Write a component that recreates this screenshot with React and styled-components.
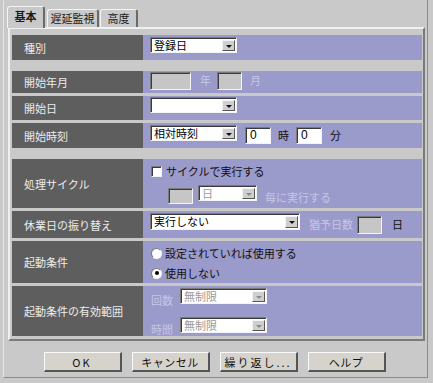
import styled, { createGlobalStyle } from "styled-components";

const GlobalStyle = createGlobalStyle`
    html, body {
        margin: 0;
        padding: 0;
        background: #c9c9c9;
    }
    body {
        font-family: "Noto Sans CJK JP", "Liberation Sans", sans-serif;
        font-size: 11px;
        color: #000;
    }
`;

export default function App() {
    return (
        <Frame>
            <GlobalStyle />
            <TabStrip>
                <Tab $active $w={38}>基本</Tab>
                <Tab $w={52}>遅延監視</Tab>
                <Tab $w={38}>高度</Tab>
            </TabStrip>

            <Panel>
                <Row $h={25}>
                    <Label>種別</Label>
                    <Value $pt={2}>
                        <Select width={87} value="登録日" />
                    </Value>
                </Row>

                <Row $h={22} $group>
                    <Label>開始年月</Label>
                    <Value $pt={1}>
                        <TextBox width={41} height={18} disabled />
                        <FieldText $disabled $ml={9} $mr={6} $mt={2}>年</FieldText>
                        <TextBox width={25} height={18} disabled />
                        <FieldText $disabled $ml={8} $mt={2}>月</FieldText>
                    </Value>
                </Row>

                <Row $h={24}>
                    <Label>開始日</Label>
                    <Value $pt={1}>
                        <Select width={87} value="" />
                    </Value>
                </Row>

                <Row $h={25}>
                    <Label>開始時刻</Label>
                    <Value $pt={2}>
                        <Select width={87} value="相対時刻" />
                        <TextBox width={26} height={17} value="0" style={{ marginLeft: 8, marginTop: 2 }} />
                        <FieldText $ml={7} $mr={7} $mt={4}>時</FieldText>
                        <TextBox width={26} height={17} value="0" style={{ marginTop: 2 }} />
                        <FieldText $ml={8} $mt={4}>分</FieldText>
                    </Value>
                </Row>

                <Row $h={49} $group>
                    <Label>処理サイクル</Label>
                    <Stack $pt={6} $gap={7}>
                        <Line>
                            <CheckBox />
                            <FieldText $ml={4}>サイクルで実行する</FieldText>
                        </Line>
                        <Line $pl={17}>
                            <TextBox width={25} height={16} disabled style={{ marginTop: 3 }} />
                            <Select width={59} value="日" disabled style={{ marginLeft: 5 }} />
                            <FieldText $disabled $ml={8} $mt={6}>毎に実行する</FieldText>
                        </Line>
                    </Stack>
                </Row>

                <Row $h={27}>
                    <Label>休業日の振り替え</Label>
                    <Value $pt={2}>
                        <Select width={150} height={17} value="実行しない" />
                        <FieldText $disabled $ml={9} $mr={4} $mt={5}>猶予日数</FieldText>
                        <TextBox width={25} height={18} disabled style={{ marginTop: 3 }} />
                        <FieldText $ml={10} $mt={5}>日</FieldText>
                    </Value>
                </Row>

                <Row $h={42}>
                    <Label>起動条件</Label>
                    <Stack $pt={2} $gap={0}>
                        <RadioLine>
                            <Radio />
                            <FieldText $ml={3}>設定されていれば使用する</FieldText>
                        </RadioLine>
                        <RadioLine>
                            <Radio $checked />
                            <FieldText $ml={3}>使用しない</FieldText>
                        </RadioLine>
                    </Stack>
                </Row>

                <Row $h={50}>
                    <Label>起動条件の有効範囲</Label>
                    <Stack $pt={2} $gap={10}>
                        <Line>
                            <FieldText $disabled $w={29} $mt={6}>回数</FieldText>
                            <Select width={87} value="無制限" disabled />
                        </Line>
                        <Line>
                            <FieldText $disabled $w={29} $mt={6}>時間</FieldText>
                            <Select width={87} value="無制限" disabled />
                        </Line>
                    </Stack>
                </Row>
            </Panel>

            <ButtonBar>
                <Button $spaced>OK</Button>
                <Button>キャンセル</Button>
                <Button $spaced>繰り返し...</Button>
                <Button>ヘルプ</Button>
            </ButtonBar>
        </Frame>
    );
}

function Select({ width, height = 16, value, disabled, style }) {
    return (
        <SelectBox style={{ width, height, ...style }} $disabled={disabled}>
            <SelectText $disabled={disabled}>{value}</SelectText>
            <ArrowButton>
                <Arrow $disabled={disabled} />
            </ArrowButton>
        </SelectBox>
    );
}

function TextBox({ width, height, value, disabled, style }) {
    return (
        <InputBox style={{ width, height, ...style }} $disabled={disabled}>
            {value}
        </InputBox>
    );
}

const Frame = styled.div`
    box-sizing: border-box;
    margin-left: 3px;
    width: 425px;
    height: 378px;
    border-left: 1px solid #e6e6e6;
    border-right: 1px solid #8c8c8c;
    border-bottom: 1px solid #8c8c8c;
    display: flex;
    flex-direction: column;
`;

const TabStrip = styled.div`
    display: flex;
    align-items: flex-end;
    gap: 1px;
    height: 27px;
    padding-left: 3px;
    position: relative;
    z-index: 1;
`;

const Tab = styled.div`
    box-sizing: border-box;
    width: ${p => p.$w}px;
    height: ${p => (p.$active ? "22px" : "18px")};
    margin-bottom: ${p => (p.$active ? "-1px" : "0")};
    margin-right: ${p => (p.$active ? "1px" : "0")};
    background: #c9c9c9;
    border-top: 1px solid #f4f4f4;
    border-left: 1px solid #f4f4f4;
    border-right: 2px solid #6a6a6a;
    border-top-left-radius: 3px;
    border-top-right-radius: 3px;
    text-align: center;
    font-size: 11px;
    font-weight: ${p => (p.$active ? "bold" : "normal")};
    line-height: ${p => (p.$active ? "19px" : "17px")};
    color: #1a1a1a;
    white-space: nowrap;
`;

const Panel = styled.div`
    box-sizing: border-box;
    margin-left: 4px;
    width: 417px;
    height: 314px;
    border-top: 2px solid #f0f0f0;
    border-left: 2px solid #f0f0f0;
    border-right: 2px solid #7a7a7a;
    border-bottom: 2px solid #7a7a7a;
    padding: 6px 1px 4px 2px;
    display: flex;
    flex-direction: column;
    gap: 3px;
`;

const Row = styled.div`
    display: grid;
    grid-template-columns: 131px 1fr;
    height: ${p => p.$h}px;
    flex-shrink: 0;
    margin-top: ${p => (p.$group ? "8px" : "0")};
`;

const Label = styled.div`
    display: flex;
    align-items: center;
    padding-left: 12px;
    background: #5e5e5e;
    color: #ececec;
    font-size: 11px;
`;

const Value = styled.div`
    display: flex;
    align-items: flex-start;
    padding: ${p => p.$pt || 0}px 0 0 7px;
    background: #9a9acb;
`;

const Stack = styled.div`
    display: flex;
    flex-direction: column;
    gap: ${p => p.$gap}px;
    padding: ${p => p.$pt || 0}px 0 0 8px;
    background: #9a9acb;
`;

const Line = styled.div`
    display: flex;
    align-items: flex-start;
    padding-left: ${p => p.$pl || 0}px;
`;

const RadioLine = styled.div`
    display: flex;
    align-items: center;
    height: 20px;
`;

const FieldText = styled.span`
    display: inline-block;
    width: ${p => (p.$w ? `${p.$w}px` : "auto")};
    margin: ${p => p.$mt || 0}px ${p => p.$mr || 0}px 0 ${p => p.$ml || 0}px;
    font-size: 11px;
    line-height: 13px;
    color: ${p => (p.$disabled ? "#c6c6e6" : "#111")};
    white-space: nowrap;
`;

const SelectBox = styled.div`
    box-sizing: border-box;
    display: flex;
    align-items: center;
    background: #fff;
    border-top: 1px solid #7a7a7a;
    border-left: 1px solid #7a7a7a;
    border-right: 1px solid #f4f4f4;
    border-bottom: 1px solid #f4f4f4;
    box-shadow: inset 1px 1px 0 #3a3a3a;
    flex-shrink: 0;
`;

const SelectText = styled.div`
    flex: 1;
    padding-left: 3px;
    font-size: 11px;
    line-height: 13px;
    color: ${p => (p.$disabled ? "#9a9a9a" : "#000")};
    white-space: nowrap;
`;

const ArrowButton = styled.div`
    box-sizing: border-box;
    width: 13px;
    height: calc(100% - 3px);
    margin: 1px 1px 1px 0;
    background: #cfcfcf;
    border-top: 1px solid #f4f4f4;
    border-left: 1px solid #f4f4f4;
    border-right: 1px solid #555;
    border-bottom: 1px solid #555;
    display: flex;
    align-items: center;
    justify-content: center;
`;

const Arrow = styled.div`
    width: 0;
    height: 0;
    margin-top: 2px;
    border-left: 3px solid transparent;
    border-right: 3px solid transparent;
    border-top: 3px solid ${p => (p.$disabled ? "#8a8a8a" : "#111")};
`;

const InputBox = styled.div`
    box-sizing: border-box;
    flex-shrink: 0;
    background: ${p => (p.$disabled ? "#c6c6c6" : "#fff")};
    border-top: 1px solid #7a7a7a;
    border-left: 1px solid #7a7a7a;
    border-right: 1px solid #f4f4f4;
    border-bottom: 1px solid #f4f4f4;
    box-shadow: inset 1px 1px 0 #3a3a3a;
    padding-left: 4px;
    font-family: "Liberation Sans", sans-serif;
    font-size: 12px;
    line-height: 15px;
`;

const CheckBox = styled.div`
    box-sizing: border-box;
    width: 11px;
    height: 11px;
    margin-top: 1px;
    background: #fff;
    border-top: 1px solid #7a7a7a;
    border-left: 1px solid #7a7a7a;
    border-right: 1px solid #f4f4f4;
    border-bottom: 1px solid #f4f4f4;
    box-shadow: inset 1px 1px 0 #3a3a3a;
`;

const Radio = styled.div`
    box-sizing: border-box;
    width: 11px;
    height: 11px;
    border-radius: 50%;
    background: #fff;
    border: 1px solid;
    border-color: #7a7a7a #f4f4f4 #f4f4f4 #7a7a7a;
    display: flex;
    align-items: center;
    justify-content: center;

    &::after {
        content: "";
        display: ${p => (p.$checked ? "block" : "none")};
        width: 4px;
        height: 4px;
        border-radius: 50%;
        background: #000;
    }
`;

const ButtonBar = styled.div`
    display: flex;
    justify-content: center;
    gap: 10px;
    margin-top: 11px;
    padding-right: 2px;
`;

const Button = styled.div`
    box-sizing: border-box;
    width: 78px;
    height: 20px;
    background: #d6d3cc;
    border-top: 1px solid #fafafa;
    border-left: 1px solid #fafafa;
    border-right: 2px solid #555;
    border-bottom: 2px solid #555;
    display: flex;
    align-items: center;
    justify-content: center;
    font-size: 11px;
    color: #111;
    letter-spacing: ${p => (p.$spaced ? "2px" : "0.5px")};
`;
